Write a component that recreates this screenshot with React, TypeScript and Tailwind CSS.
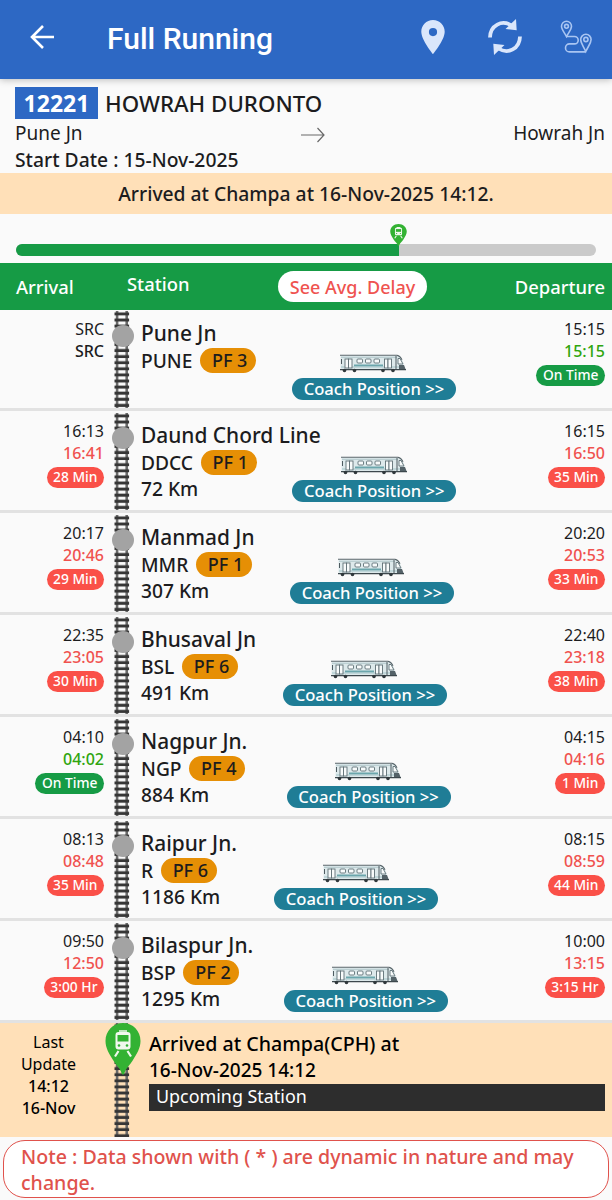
import React from 'react';

type Stop = {
  name: string;
  code: string;
  platform: string;
  km?: string;
  arrival: string;
  actualArrival: string;
  arrivalDelay?: string;
  departure: string;
  actualDeparture: string;
  departureDelay: string;
};

const stops: Stop[] = [
  { name: 'Pune Jn', code: 'PUNE', platform: 'PF 3', arrival: 'SRC', actualArrival: 'SRC', departure: '15:15', actualDeparture: '15:15', departureDelay: 'On Time' },
  { name: 'Daund Chord Line', code: 'DDCC', platform: 'PF 1', km: '72 Km', arrival: '16:13', actualArrival: '16:41', arrivalDelay: '28 Min', departure: '16:15', actualDeparture: '16:50', departureDelay: '35 Min' },
  { name: 'Manmad Jn', code: 'MMR', platform: 'PF 1', km: '307 Km', arrival: '20:17', actualArrival: '20:46', arrivalDelay: '29 Min', departure: '20:20', actualDeparture: '20:53', departureDelay: '33 Min' },
  { name: 'Bhusaval Jn', code: 'BSL', platform: 'PF 6', km: '491 Km', arrival: '22:35', actualArrival: '23:05', arrivalDelay: '30 Min', departure: '22:40', actualDeparture: '23:18', departureDelay: '38 Min' },
  { name: 'Nagpur Jn.', code: 'NGP', platform: 'PF 4', km: '884 Km', arrival: '04:10', actualArrival: '04:02', arrivalDelay: 'On Time', departure: '04:15', actualDeparture: '04:16', departureDelay: '1 Min' },
  { name: 'Raipur Jn.', code: 'R', platform: 'PF 6', km: '1186 Km', arrival: '08:13', actualArrival: '08:48', arrivalDelay: '35 Min', departure: '08:15', actualDeparture: '08:59', departureDelay: '44 Min' },
  { name: 'Bilaspur Jn.', code: 'BSP', platform: 'PF 2', km: '1295 Km', arrival: '09:50', actualArrival: '12:50', arrivalDelay: '3:00 Hr', departure: '10:00', actualDeparture: '13:15', departureDelay: '3:15 Hr' },
];

function Track({ height, id }: { height: number; id: string }) {
  return (
    <svg width="16" height={height} className="block">
      <defs>
        <pattern id={id} width="16" height="6.1" patternUnits="userSpaceOnUse">
          <rect x="1.800" width="2.6" height="6.1" fill="#6b6b6b" />
          <rect x="11.4" width="2.6" height="6.1" fill="#6b6b6b" />
          <rect x="0.5" y="1.4" width="14.6" height="3" fill="#363636" />
        </pattern>
      </defs>
      <rect width="16" height={height} fill={`url(#${id})`} />
    </svg>
  );
}

function TrainPin({ width, height }: { width: number; height: number }) {
  return (
    <svg width={width} height={height} viewBox="0 0 36 52" preserveAspectRatio="none" className="block">
      <path d="M18 0C8 0 .5 8 .5 18c0 7 3.5 12.500 7.500 19C11 42 15 45 16.500 50c.6 2 2.400 2 3 0C21 45 25 42 28 37c4-6.500 7.500-12 7.500-19C35.500 8 28 0 18 0Z" fill="#33b233" />
      <path d="M14 7.200h8v1.600h-8zM13.500 9h9A3 3 0 0 1 25.500 12v11.500a3 3 0 0 1-3 3h-9a3 3 0 0 1-3-3V12a3 3 0 0 1 3-3Z" fill="#f1f8ee" />
      <path d="M12.500 12h11v6.500h-11z" fill="#33b233" />
      <circle cx="14" cy="22.500" r="1.300" fill="#33b233" />
      <circle cx="22" cy="22.500" r="1.300" fill="#33b233" />
      <path d="m13.500 28-3.500 5.500M22.500 28l3.500 5.500" stroke="#f1f8ee" strokeWidth="2.200" fill="none" />
    </svg>
  );
}

function CoachDrawing() {
  return (
    <svg width="67" height="19" viewBox="0 0 67 19" className="block">
      <path d="M.5 1.500h57c3 1 5 4 6 8l1.500 6H.5Z" fill="#dde9eb" />
      <path d="M0 1.200h57c2.500.6 4 2.400 5 4.500" stroke="#59666b" strokeWidth="1.100" fill="none" />
      <path d="M1 3.300h56" stroke="#b3c8cc" />
      <path d="M14 11.500h29" stroke="#6ba6ac" strokeWidth="2" />
      <path d="M1 13h63" stroke="#a4c5c9" />
      <path d="M0 15.600h66" stroke="#3d484d" strokeWidth="1.400" />
      <g fill="#f8fbfb" stroke="#5f7076" strokeWidth=".9">
        <rect x="5" y="5" width="3.500" height="9" />
        <rect x="8.500" y="5" width="3.500" height="9" />
        <rect x="17" y="5" width="5.500" height="4" rx="1" />
        <rect x="25.500" y="5" width="5.500" height="4" rx="1" />
        <rect x="34" y="5" width="5.500" height="4" rx="1" />
        <rect x="44.500" y="5" width="3.500" height="9" />
        <rect x="48" y="5" width="3.500" height="9" />
        <path d="M58 4.500h2l3 5.500h-5z" />
      </g>
      <path d="M56 2v13M1.500 5v5" stroke="#4e5b60" />
      <path d="M59 11h5l1.500 4H59z" fill="#546268" />
      <g fill="#30383c">
        <circle cx="4.500" cy="16.500" r="1.800" />
        <circle cx="14.500" cy="16.500" r="1.800" />
        <circle cx="43" cy="16.500" r="1.800" />
        <circle cx="53" cy="16.500" r="1.800" />
      </g>
    </svg>
  );
}

function DelayBadge({ label }: { label: string }) {
  return (
    <span
      className={`mt-[3px] h-[21px] rounded-full px-[6.500px] text-[13.800px] leading-[20px] font-medium whitespace-nowrap text-white ${
        label === 'On Time' ? 'bg-[#169b45]' : 'bg-[#fa5048]'
      }`}
    >
      {label}
    </span>
  );
}

function Times({ planned, actual, delay, source }: { planned: string; actual: string; delay?: string; source?: boolean }) {
  const onTime = delay === 'On Time';
  return (
    <div className="flex flex-col items-end text-[16px] leading-[22px]">
      <span>{planned}</span>
      <span className={`font-medium ${source ? 'text-[#1c1c1e]' : onTime ? 'text-[#2fa50e]' : 'text-[#f0524f]'}`}>{actual}</span>
      {delay && <DelayBadge label={delay} />}
    </div>
  );
}

function StopRow({ stop, first }: { stop: Stop; first: boolean }) {
  return (
    <div className={`flex items-end border-b-[3px] border-[#e2e2e2] pr-[7px] ${first ? 'h-[101px]' : 'h-[102px]'}`}>
      <div className="h-[90px] w-[104px]">
        <Times planned={stop.arrival} actual={stop.actualArrival} delay={stop.arrivalDelay} source={stop.arrival === 'SRC'} />
      </div>
      <div className="relative ml-[10px] w-[16px]">
        <Track height={97} id={`track-${stop.code}`} />
        <span className="absolute top-[14px] -left-[2px] h-[22px] w-[22px] rounded-full bg-[#a3a3a3]" />
      </div>
      <div className="ml-[11px] h-[89px] w-[351px]">
        <div className="h-[28px] text-[20.900px] leading-[28px] font-medium">{stop.name}</div>
        <div className="flex">
          <div className="text-[19.200px] font-medium">
            <div className="flex h-[27px] items-center gap-[7.500px]">
              <span className="leading-[26px]">{stop.code}</span>
              <span className="h-[25px] rounded-full bg-[#e68f05] pr-[8.500px] pl-[12px] text-[18px] leading-[25px]">{stop.platform}</span>
            </div>
            <div className="leading-[26px]">{stop.km}</div>
          </div>
          <div className="flex flex-1 flex-col items-center pt-[7px]">
            <CoachDrawing />
            <button className="mt-[5px] h-[22px] w-[164px] rounded-full bg-[#1f7d96] text-[16.600px] leading-[22px] font-medium whitespace-nowrap text-white">
              Coach Position &gt;&gt;
            </button>
          </div>
        </div>
      </div>
      <div className="h-[90px] flex-1">
        <Times planned={stop.departure} actual={stop.actualDeparture} delay={stop.departureDelay} />
      </div>
    </div>
  );
}

function TopBar() {
  return (
    <header className="relative flex h-[79px] items-center bg-[#2d68c4] pr-[19px] pb-[5px] pl-[29px] shadow-[0_1px_7px_rgba(0,0,0,0.25)]">
      <svg width="26" height="26" viewBox="0 0 26 26" fill="none" stroke="#fff" strokeWidth="2.600">
        <path d="M25 13H3M14 2 3 13l11 11" />
      </svg>
      <h1 className="mt-[3px] ml-[52px] flex-1 font-[Roboto] text-[30px] leading-[40px] font-medium text-white">Full Running</h1>
      <svg width="24" height="34" viewBox="0 0 24 34" className="mr-[43px]">
        <path fillRule="evenodd" d="M12 0C5.300 0 .3 5.200.3 11.700.3 20 12 34 12 34s11.700-14 11.700-22.300C23.700 5.200 18.700 0 12 0Zm0 8a4.100 4.100 0 1 1 0 8.200A4.100 4.100 0 0 1 12 8Z" fill="#dae6fb" />
      </svg>
      <svg width="34" height="36" viewBox="0 0 34 36" className="mr-[38px]">
        <path d="M2 18.500C2.300 6 14 .5 23.500 6.500M32 17.500C31.700 30 20 35.500 10.500 29.500" stroke="#dae6fb" strokeWidth="3.800" fill="none" />
        <path d="m28 0 .7 11.200L17.500 10ZM6 36l-.7-11.200L16.500 26Z" fill="#dae6fb" />
      </svg>
      <svg width="33" height="34" viewBox="0 0 33 34" fill="none" stroke="#a9c5f2" strokeWidth="1.600">
        <path d="M6.500 16.500C4 12 1.500 9.500 1.500 6.300a5 5 0 0 1 10 0c0 3.200-2.500 5.700-5 10.200ZM25.800 31.500C23 25.500 20.700 23 20.700 19.500a5.200 5.200 0 0 1 10.400 0c0 3.500-2.500 6-5.300 12Z" />
        <circle cx="6.500" cy="6.300" r="1.900" />
        <circle cx="25.900" cy="19.500" r="2.100" />
        <path d="M6.500 16.500h8a3.700 3.700 0 0 1 0 7.400H9.500a4 4 0 0 0 0 8h16.300" />
      </svg>
    </header>
  );
}

export default function App() {
  return (
    <div className="h-[1200px] w-[612px] overflow-hidden bg-[#fafafa] font-['Noto_Sans',sans-serif] text-[#1c1c1e]">
      <TopBar />

      <section className="h-[94px] pt-[8px] pr-[7px] pl-[15px]">
        <div className="flex h-[33px] items-start">
          <span className="h-[32px] w-[83px] bg-[#2d68c4] text-center text-[23px] leading-[32px] font-bold text-white">12221</span>
          <span className="ml-[7px] pt-px text-[22.300px] leading-[32px] font-medium">HOWRAH DURONTO</span>
        </div>
        <div className="flex h-[27px] items-center justify-between text-[19px] leading-[27px]">
          <span className="w-[240px]">Pune Jn</span>
          <svg width="26" height="16" viewBox="0 0 26 16" className="mt-[3px] ml-[5px]" fill="none" stroke="#686868" strokeWidth="1.200">
            <path d="M1 8h23M17.500 1l6.500 7-6.500 7" />
          </svg>
          <span className="w-[240px] text-right">Howrah Jn</span>
        </div>
        <div className="text-[19.300px] leading-[26px] font-medium">Start Date : 15-Nov-2025</div>
      </section>

      <div className="h-[41px] bg-[#ffe0b8] text-center text-[19.300px] leading-[42px] font-medium">
        Arrived at Champa at 16-Nov-2025 14:12.
      </div>

      <section className="h-[49px] px-[16px] pt-[30px]">
        <div className="relative h-[12px] overflow-visible rounded-full bg-[#cacaca]">
          <div className="h-[12px] w-[383px] rounded-l-full bg-[#169b45]" />
          <div className="absolute -top-[20px] left-[374px]">
            <TrainPin width={17} height={22} />
          </div>
        </div>
      </section>

      <div className="flex h-[47px] items-center bg-[#169b45] pr-[7px] pl-[16px] text-[18.400px] font-medium text-white">
        <span className="w-[111px]">Arrival</span>
        <span className="-mt-[5px] w-[151px]">Station</span>
        <button className="h-[31px] w-[149px] rounded-full bg-white text-[18px] leading-[30px] text-[#ef5350]">See Avg. Delay</button>
        <span className="flex-1 text-right">Departure</span>
      </div>

      {stops.map((stop, i) => (
        <StopRow key={stop.code} stop={stop} first={i === 0} />
      ))}

      <section className="flex h-[114px] bg-[#ffe0b8] pr-[7px] text-black">
        <div className="w-[97px] pt-[8px] text-center text-[16px] leading-[22px]">
          <div>Last</div>
          <div>Update</div>
          <div className="font-medium">14:12</div>
          <div className="font-medium">16-Nov</div>
        </div>
        <div className="relative ml-[17px] w-[16px]">
          <Track height={114} id="track-last" />
          <div className="absolute top-0 -left-[9px]">
            <TrainPin width={36} height={52} />
          </div>
        </div>
        <div className="ml-[19px] flex-1 pt-[7px] text-[19px] leading-[27px] font-medium">
          <div className="text-[19.600px]">Arrived at Champa(CPH) at</div>
          <div>16-Nov-2025 14:12</div>
          <div className="h-[27px] bg-[#2d2d2d] pl-[7px] text-[17.900px] leading-[25px] font-normal text-white">Upcoming Station</div>
        </div>
      </section>

      <section className="mx-[3px] mt-[3px] h-[58px] rounded-[22px] border-[1.500px] border-[#e0524c] bg-white pt-[3px] pl-[17px] text-[19.600px] leading-[26px] font-medium text-[#e0524c]">
        <div className="whitespace-nowrap">Note : Data shown with ( * ) are dynamic in nature and may</div>
        <div>change.</div>
      </section>
    </div>
  );
}
